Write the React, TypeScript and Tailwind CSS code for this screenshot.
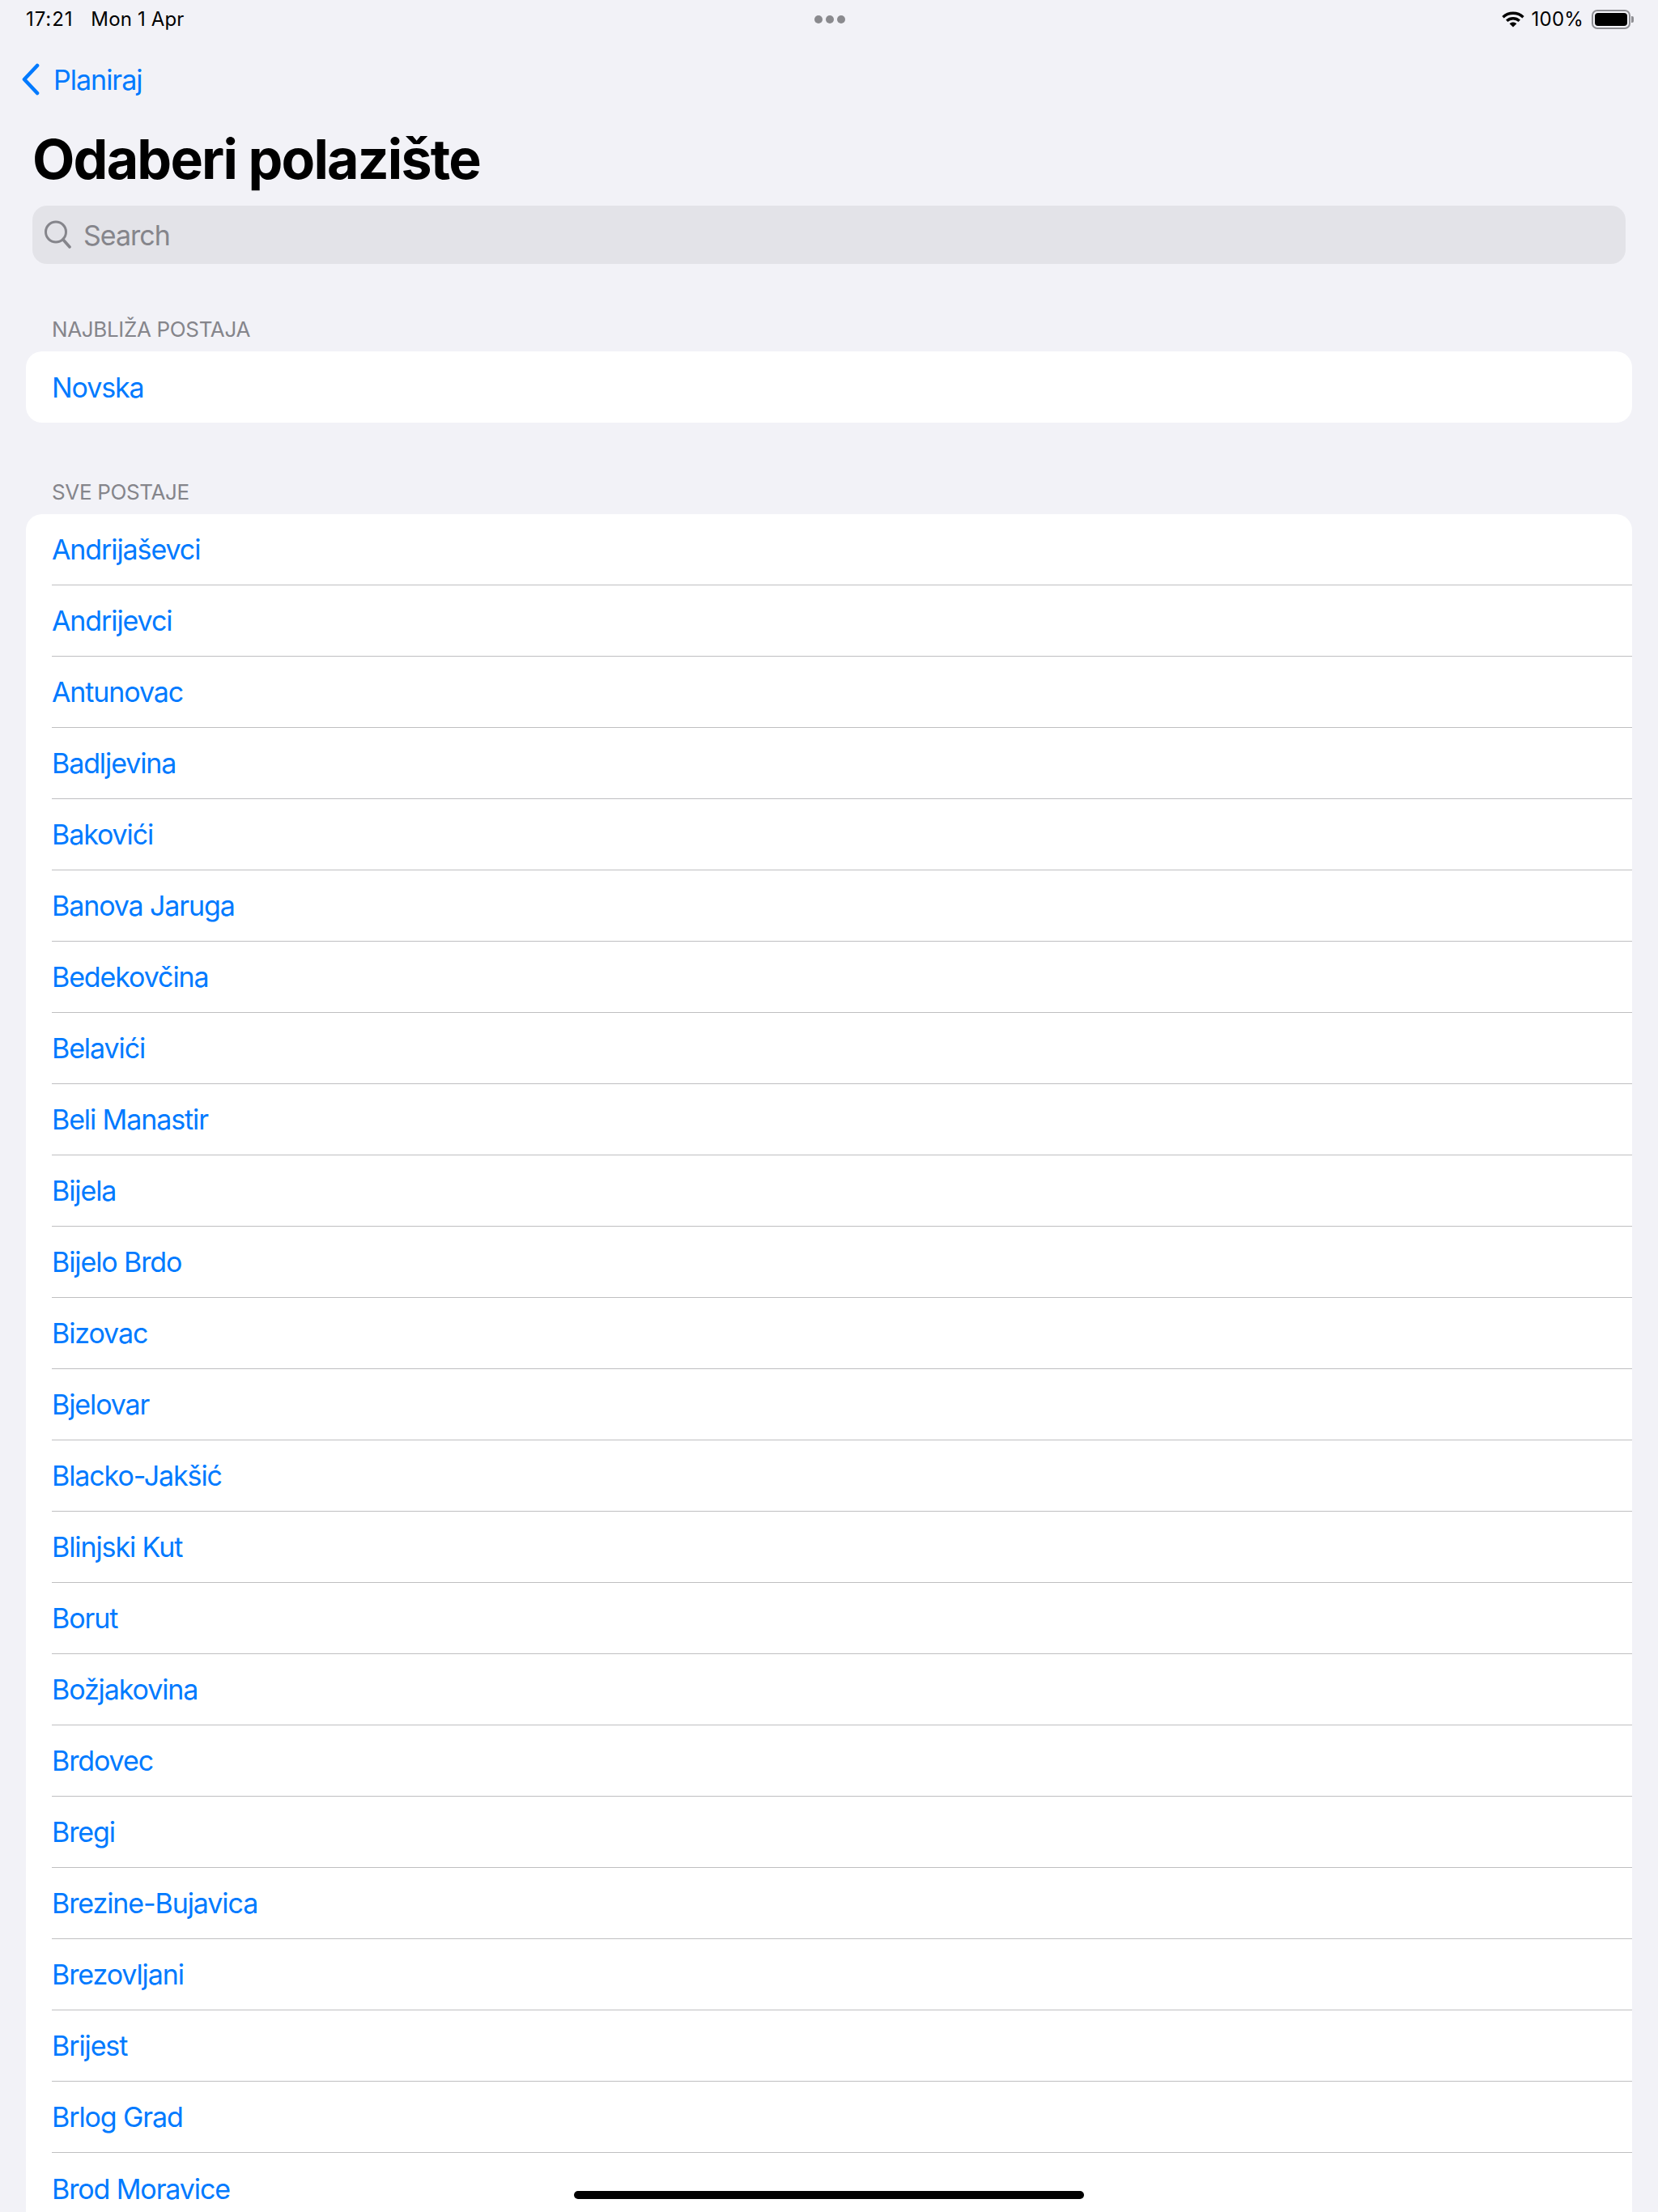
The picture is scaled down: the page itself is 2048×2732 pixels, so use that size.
const stations = ["Andrijaševci","Andrijevci","Antunovac","Badljevina","Bakovići","Banova Jaruga","Bedekovčina","Belavići","Beli Manastir","Bijela","Bijelo Brdo","Bizovac","Bjelovar","Blacko-Jakšić","Blinjski Kut","Borut","Božjakovina","Brdovec","Bregi","Brezine-Bujavica","Brezovljani","Brijest","Brlog Grad","Brod Moravice"];

function Wifi() {
  return (
    <svg width="28" height="20" viewBox="0 0 28 20" fill="none">
      <path d="M1.5 7.2C8.5 .6 19.5 .6 26.5 7.2" stroke="#000" strokeWidth="3.4" />
      <path d="M6.2 11.8C10.6 7.8 17.4 7.8 21.8 11.8" stroke="#000" strokeWidth="3.4" />
      <path d="M9.6 15.2 14 19.6 18.4 15.2C15.8 12.8 12.2 12.8 9.6 15.2Z" fill="#000" />
    </svg>
  );
}

function Battery() {
  return (
    <div className="flex items-center">
      <div className="w-[48px] h-[24px] rounded-[7px] border-2 border-[#8e8e93] p-[2px]">
        <div className="w-full h-full rounded-[4px] bg-black" />
      </div>
      <div className="w-[3px] h-[8px] rounded-r-[2px] bg-[#8e8e93] ml-[1px]" />
    </div>
  );
}

export default function App() {
  return (
    <div className="relative w-[2048px] h-[2732px] overflow-hidden bg-[#f2f2f7] text-black font-['Inter','Liberation_Sans',sans-serif]">
      <div className="h-[48px] flex items-center justify-between pl-[32px] pr-[30px] text-[24px] leading-[28px]">
        <div className="w-[600px] flex gap-[22px]">
          <span className="tracking-[0.9px]">17:21</span>
          <span className="tracking-[0.15px]">Mon 1 Apr</span>
        </div>
        <div className="flex gap-[4px]">
          <div className="w-[10px] h-[10px] rounded-full bg-[#8a8a8e]" />
          <div className="w-[10px] h-[10px] rounded-full bg-[#8a8a8e]" />
          <div className="w-[10px] h-[10px] rounded-full bg-[#8a8a8e]" />
        </div>
        <div className="w-[600px] flex items-center justify-end">
          <Wifi />
          <span className="ml-[9px] mr-[10px] tracking-[0.2px]">100%</span>
          <Battery />
        </div>
      </div>

      <div className="h-[50px] mt-[25px] flex items-center pl-[26px] text-[34px] tracking-[-1px] text-[#007aff]">
        <svg width="24" height="40" viewBox="0 0 24 40" fill="none" className="mr-[16px]">
          <path d="M20 3 4 20 20 37" stroke="#007aff" strokeWidth="4.6" strokeLinecap="round" strokeLinejoin="round" />
        </svg>
        <span>Planiraj</span>
      </div>

      <h1 className="mt-[35px] ml-[40px] h-[76px] text-[68px] leading-[76px] font-bold tracking-[-1.8px]">Odaberi polazište</h1>

      <div className="mt-[20px] ml-[40px] w-[1968px] h-[72px] rounded-[18px] bg-[#e3e3e8] flex items-center pl-[14px] text-[34px] tracking-[-1px] text-[#85858b]">
        <svg width="34" height="38" viewBox="0 0 34 38" fill="none" className="mr-[15px]">
          <circle cx="15" cy="15.5" r="12.5" stroke="#85858b" strokeWidth="3" />
          <path d="M24 25 32 34" stroke="#85858b" strokeWidth="3.6" strokeLinecap="round" />
        </svg>
        <span>Search</span>
      </div>

      <div className="mt-[52px] ml-[64px] h-[56px] flex items-center text-[26px] text-[#85858b] tracking-[-0.35px]">NAJBLIŽA POSTAJA</div>
      <div className="ml-[32px] w-[1984px] h-[88px] rounded-[20px] bg-white flex items-center pl-[32px] text-[34px] tracking-[-1.1px] text-[#007aff]">Novska</div>

      <div className="mt-[57px] ml-[64px] h-[56px] flex items-center text-[26px] text-[#85858b] tracking-[-0.35px]">SVE POSTAJE</div>
      <div className="ml-[32px] w-[1984px] rounded-t-[20px] bg-white pl-[32px] text-[34px] tracking-[-1.1px] text-[#007aff]">
        {stations.map((s, i) => (
          <div key={s} className={i === stations.length - 1 ? "h-[88px] flex items-center" : "h-[88px] flex items-center border-b border-[#bfbfc1]"}>
            {s}
          </div>
        ))}
      </div>

      <div className="absolute left-[709px] top-[2706px] w-[630px] h-[10px] rounded-full bg-black" />
    </div>
  );
}
